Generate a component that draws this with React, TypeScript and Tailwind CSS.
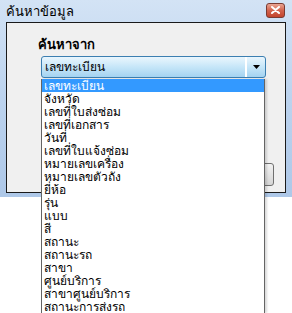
const items = [
  'เลขทะเบียน',
  'จังหวัด',
  'เลขที่ใบส่งซ่อม',
  'เลขที่เอกสาร',
  'วันที่',
  'เลขที่ใบแจ้งซ่อม',
  'หมายเลขเครื่อง',
  'หมายเลขตัวถัง',
  'ยี่ห้อ',
  'รุ่น',
  'แบบ',
  'สี',
  'สถานะ',
  'สถานะรถ',
  'สาขา',
  'ศูนย์บริการ',
  'สาขาศูนย์บริการ',
  'สถานะการส่งรถ',
];

export default function App() {
  return (
    <div className="relative w-[292px] h-[313px] bg-white overflow-hidden font-['Tahoma','Noto_Sans','DejaVu_Sans',sans-serif] text-[12px] text-black">
      {/* window */}
      <div className="h-[197px] bg-gradient-to-b from-[#d3e3f5] via-[#bcd3ee] to-[#aec8e8] px-[6px] flex flex-col">
        <div className="h-[22px] flex items-center justify-between pl-0 pr-[1px]">
          <span className="text-[13px] leading-none">ค้นหาข้อมูล</span>
          <div className="w-[19px] h-[15px] mt-[-2px] rounded-[3px] border border-[#7a3b32] bg-gradient-to-b from-[#e9a594] via-[#d2634d] to-[#c3442c] flex items-center justify-center">
            <svg width="9" height="8" viewBox="0 0 9 8">
              <path d="M1 1 L8 7 M8 1 L1 7" stroke="#fff" strokeWidth="2" strokeLinecap="round" />
            </svg>
          </div>
        </div>
        <div className="h-[171px] border border-[#1a1a1a] bg-[#f0f0f0] flex flex-col pl-[31px] pr-[11px] pt-[13px]">
          <div className="font-bold text-[13px] leading-[16px]">ค้นหาจาก</div>
          <div className="mt-[4px] ml-[3px] w-[225px] h-[22px] rounded-[3px] border border-[#3c7fb1] bg-gradient-to-b from-[#eaf6fd] via-[#c6e6f8] to-[#a4d3f1] flex items-center">
            <span className="flex-1 pl-[3px] text-[12px]">เลขทะเบียน</span>
            <div className="w-[2px] h-full bg-white" />
            <div className="w-[18px] flex items-center justify-center">
              <svg width="7" height="4" viewBox="0 0 7 4">
                <path d="M0 0 H7 L3.5 4 Z" fill="#000" />
              </svg>
            </div>
          </div>
          <div className="mt-auto mb-[6px] self-end w-[70px] h-[23px] rounded-[3px] border border-[#707070] bg-gradient-to-b from-[#f2f2f2] to-[#d5d5d5]" />
        </div>
      </div>

      {/* dropdown list */}
      <div className="absolute left-[41px] top-[79px] w-[224px] bg-white border-l border-r border-[#646464] shadow-[2px_0_2px_rgba(0,0,0,0.15)]">
        {items.map((t, i) => (
          <div
            key={t}
            className={
              i === 0
                ? 'h-[13px] leading-[13px] pl-[2px] bg-[#3399ff] text-white'
                : 'h-[13px] leading-[13px] pl-[2px]'
            }
          >
            {t}
          </div>
        ))}
      </div>
    </div>
  );
}
